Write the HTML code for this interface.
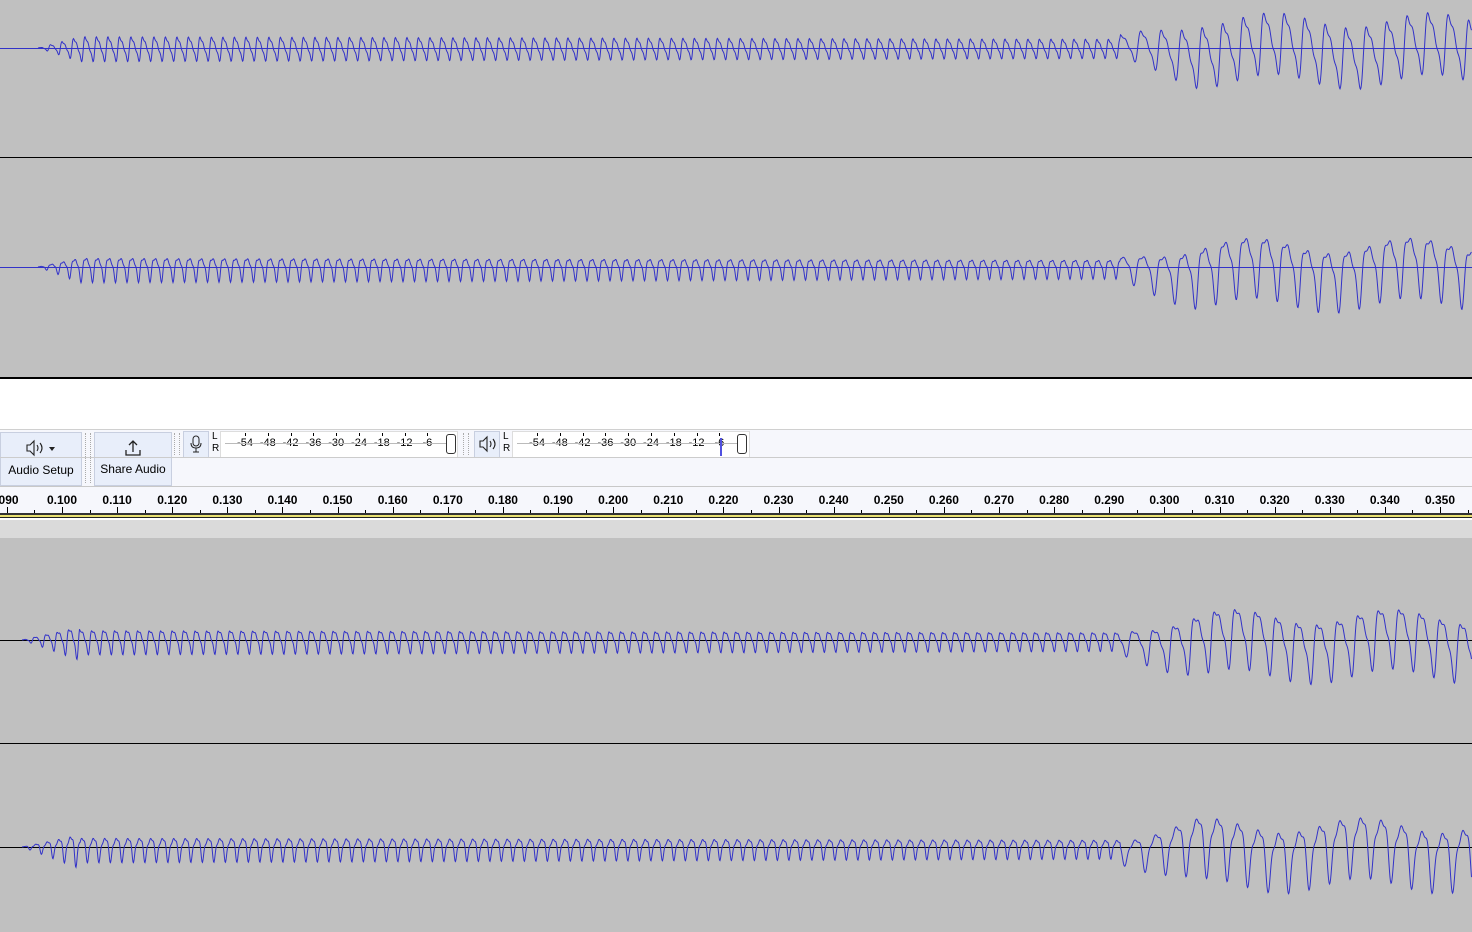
<!DOCTYPE html>
<html><head><meta charset="utf-8"><style>
body{margin:0;width:1472px;height:932px;overflow:hidden;background:#c0c0c0;font-family:"Liberation Sans",sans-serif;position:relative}
.abs{position:absolute}
#tb{left:0;top:429px;width:1472px;height:57px;background:#f6f7fc;border-top:1px solid #d0d0d0}
#ruler{left:0;top:486px;width:1472px;height:26px;background:#f6f7fc;border-top:1px solid #c8c8c8}
.lab{position:absolute;top:6px;font-size:12px;font-weight:bold;color:#000;transform:translateX(-50%)}
.btn{position:absolute;background:#e8eefa;border:1px solid #c8cfe0;font-size:12px;color:#000;text-align:center}
.grip{position:absolute;width:4px;border-left:1px dotted #aaa;border-right:1px dotted #aaa}
.m{position:absolute;font-size:11px;top:7px;transform:translateX(-50%)}
</style></head><body>
<svg class="abs" style="left:0;top:0" width="1472" height="932">
<rect x="0" y="0" width="1472" height="377" fill="#c0c0c0"/>
<line x1="0" y1="157.5" x2="1472" y2="157.5" stroke="#000"/>
<line x1="0" y1="48.5" x2="1472" y2="48.5" stroke="#3232c8"/>
<line x1="0" y1="267.5" x2="1472" y2="267.5" stroke="#3232c8"/>
<rect x="0" y="377" width="1472" height="2" fill="#000"/>
<rect x="0" y="379" width="1472" height="50" fill="#fff"/>
<rect x="0" y="520" width="1472" height="18" fill="#dadada"/>
<line x1="0" y1="640.5" x2="1472" y2="640.5" stroke="#000"/>
<line x1="0" y1="743.5" x2="1472" y2="743.5" stroke="#000"/>
<line x1="0" y1="847.5" x2="1472" y2="847.5" stroke="#000"/>
<g id="w" fill="none" stroke="#3232c8" stroke-width="1"></g>
</svg>
<div class="abs" style="left:0;top:513px;width:1472px;height:2px;background:#333"></div>
<div class="abs" style="left:0;top:515px;width:1472px;height:2px;background:#e8e070"></div>
<div class="abs" style="left:0;top:517px;width:1472px;height:1px;background:#222"></div>
<div class="abs" style="left:0;top:518px;width:1472px;height:2px;background:#fff"></div>
<div id="tb" class="abs">
 <div class="btn" style="left:0;top:2px;width:80px;height:52px"><svg width="40" height="20" style="margin-top:5px" viewBox="0 0 40 20"><path d="M6 7h3l4-4v14l-4-4H6z M16 7q2 3 0 6 M19 5q4 5 0 10" fill="none" stroke="#222" stroke-width="1.1"/><path d="M28 9h6l-3 4z" fill="#222"/></svg><div style="margin-top:2px">Audio Setup</div></div>
 <div class="grip" style="left:85px;top:3px;height:50px"></div>
 <div class="btn" style="left:94px;top:2px;width:76px;height:52px"><svg width="20" height="20" style="margin-top:5px" viewBox="0 0 20 20"><path d="M10 14V3M6 7l4-4 4 4M3 12v5h14v-5" fill="none" stroke="#222" stroke-width="1.3"/></svg><div style="margin-top:1px">Share Audio</div></div>
 <div class="grip" style="left:174px;top:3px;height:22px"></div>
 <div class="btn" style="left:183px;top:1px;width:24px;height:25px"><svg width="14" height="20" style="margin-top:2px" viewBox="0 0 14 20"><rect x="4" y="2" width="6" height="10" rx="3" fill="none" stroke="#222"/><path d="M2 9q0 5 5 5t5-5M7 14v4M4 18h6" fill="none" stroke="#222"/></svg></div>
 <div class="abs" style="left:212px;top:1px;font-size:10px;line-height:12px">L<br>R</div>
 <div class="abs" style="left:220px;top:1px;width:236px;height:25px;background:#fff;border:1px solid #ddd"></div>
 <div id="m1"></div>
 <div class="abs" style="left:446px;top:4px;width:8px;height:18px;border:1px solid #333;border-radius:3px;background:#fff"></div>
 <div class="grip" style="left:463px;top:3px;height:22px"></div>
 <div class="btn" style="left:474px;top:1px;width:24px;height:25px"><svg width="20" height="20" style="margin-top:2px" viewBox="0 0 20 20"><path d="M3 7h3l4-4v14l-4-4H3z M13 7q2 3 0 6 M16 5q4 5 0 10" fill="none" stroke="#222" stroke-width="1.1"/></svg></div>
 <div class="abs" style="left:503px;top:1px;font-size:10px;line-height:12px">L<br>R</div>
 <div class="abs" style="left:512px;top:1px;width:236px;height:25px;background:#fff;border:1px solid #ddd"></div>
 <div id="m2"></div>
 <div class="abs" style="left:720px;top:8px;width:2px;height:18px;background:#5050e0"></div>
 <div class="abs" style="left:737px;top:4px;width:8px;height:18px;border:1px solid #333;border-radius:3px;background:#fff"></div>
 <div class="abs" style="left:0;top:27px;width:1472px;height:1px;background:#ccc"></div>
</div>
<div id="ruler" class="abs"></div>
<script>
var labs=['-54','-48','-42','-36','-30','-24','-18','-12','-6'];
function meter(id,x0){var h='';for(var i=0;i<9;i++){var x=x0+i*22.8;h+='<div class="m" style="left:'+x+'px">'+labs[i]+'</div><div class="abs" style="left:'+Math.round(x)+'px;top:3px;width:1px;height:3px;background:#000"></div>';}
h+='<div class="abs" style="left:'+(x0-20)+'px;top:13px;width:225px;height:1px;background:#bbb"></div>';document.getElementById(id).innerHTML=h;}
meter('m1',245);meter('m2',537);
var r=document.getElementById('ruler'),h='';
for(var i=-1;i<=26;i++){var x=62+i*55.12;var v=(0.1+i*0.01).toFixed(3);if(i==-1)v='.090';
h+='<div class="lab" style="left:'+x+'px">'+v+'</div><div class="abs" style="left:'+Math.round(x)+'px;top:20px;width:1px;height:6px;background:#000"></div><div class="abs" style="left:'+Math.round(x+27.5)+'px;top:23px;width:1px;height:3px;background:#000"></div>';}
r.innerHTML=h;
var g=document.getElementById('w'),s='';
function wave(cy,x0,seed){var d='M'+x0+' '+cy;var ph=0;
for(var x=x0;x<1472;x+=0.5){var a,p;
 if(x<80)a=(x-x0)/42*13;else if(x<1120)a=13-(x-80)/1040*3;else a=12+Math.min(1,(x-1120)/80)*20;
 p=x<1120?11.5:20.5;ph+=0.5*2*Math.PI/p;
 var y=Math.sin(ph)+0.35*Math.sin(2*ph+seed)+0.2*Math.sin(3*ph+seed*2);
 if(x>1120)y+=0.3*Math.sin(ph*0.13+seed);
 d+=' L'+x+' '+(cy-a*y*0.8).toFixed(1);}
return '<path d="'+d+'"/>';}
s+=wave(48,38,0.3)+wave(267,38,1.1)+wave(640,22,0.7)+wave(847,22,1.9);
g.innerHTML=s;
</script>
</body></html>
